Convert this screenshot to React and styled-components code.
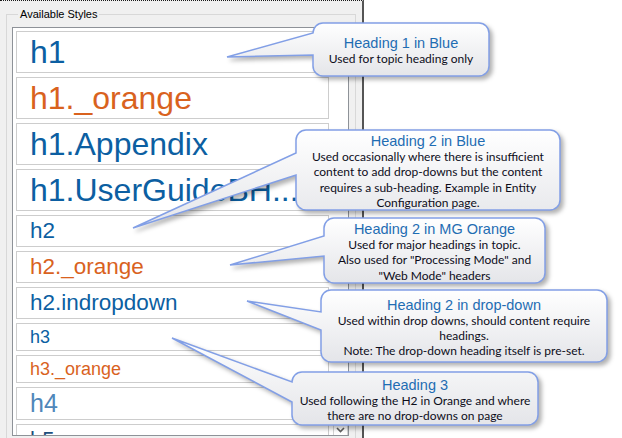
import React, { useId } from 'react';
import styled, { createGlobalStyle } from 'styled-components';

const GlobalStyle = createGlobalStyle`
  html, body {
    margin: 0;
    padding: 0;
    background: #fff;
  }
  body {
    overflow: hidden;
  }
`;

const BLUE = '#0c5fa2';
const ORANGE = '#d9621e';

// style list entries
const styleItems = [
  { name: 'h1', size: 32, lh: 40, color: BLUE },
  { name: 'h1._orange', size: 32, lh: 40, color: ORANGE },
  { name: 'h1.Appendix', size: 32, lh: 40, color: BLUE },
  { name: 'h1.UserGuideBH...', size: 32, lh: 40, color: BLUE },
  { name: 'h2', size: 22.5, lh: 30, color: BLUE },
  { name: 'h2._orange', size: 22.5, lh: 30, color: ORANGE },
  { name: 'h2.indropdown', size: 22.5, lh: 30, color: BLUE },
  { name: 'h3', size: 18, lh: 26, color: BLUE },
  { name: 'h3._orange', size: 18, lh: 26, color: ORANGE },
  { name: 'h4', size: 25, lh: 31, color: '#4f87ba' },
  { name: 'h5', size: 22, lh: 30, color: '#1d4f7c' },
];

// callouts: box in page coords, tip and tail base (page y) on the left edge
const callouts = [
  {
    title: 'Heading 1 in Blue',
    lines: ['Used for topic heading only'],
    left: 313, top: 23, width: 176, height: 53,
    tip: [227, 57], base: [33, 55],
  },
  {
    title: 'Heading 2 in Blue',
    lines: [
      'Used occasionally where there is insufficient',
      'content to add drop-downs but the content',
      'requires a sub-heading. Example in Entity',
      'Configuration page.',
    ],
    left: 296, top: 130, width: 264, height: 80,
    tip: [133, 228], base: [153, 175],
  },
  {
    title: 'Heading 2 in MG Orange',
    lines: [
      'Used for major headings in topic.',
      'Also used for "Processing Mode" and',
      '"Web Mode" headers',
    ],
    left: 324, top: 218, width: 221, height: 65,
    tip: [230, 265], base: [236, 256],
  },
  {
    title: 'Heading 2 in drop-down',
    lines: [
      'Used within drop downs, should content require',
      'headings.',
      'Note: The drop-down heading itself is pre-set.',
    ],
    left: 321, top: 290, width: 286, height: 72,
    tip: [247, 301], base: [312, 330],
  },
  {
    title: 'Heading 3',
    lines: [
      'Used following the H2 in Orange and where',
      'there are no drop-downs on page',
    ],
    left: 292, top: 372, width: 246, height: 53,
    tip: [172, 338], base: [382, 402],
  },
];

const bubblePath = (w, h, tx, ty, b1, b2, r = 10) =>
  `M${r},0 H${w - r} A${r},${r} 0 0 1 ${w},${r} V${h - r} ` +
  `A${r},${r} 0 0 1 ${w - r},${h} H${r} A${r},${r} 0 0 1 0,${h - r} ` +
  `V${b2} L${tx},${ty} L0,${b1} V${r} A${r},${r} 0 0 1 ${r},0 Z`;

const Callout = ({ c }) => {
  const id = useId().replace(/:/g, '');
  const tx = c.tip[0] - c.left;
  const ty = c.tip[1] - c.top;
  const b1 = Math.max(10, c.base[0] - c.top);
  const b2 = Math.min(c.height - 10, c.base[1] - c.top);
  return (
    <Bubble style={{ left: c.left, top: c.top, width: c.width, height: c.height }}>
      <BubbleShape width={c.width} height={c.height}>
        <defs>
          <linearGradient id={`g${id}`} x1="0" y1="0" x2="0" y2="1">
            <stop offset="0" stopColor="#ffffff" />
            <stop offset="1" stopColor="#e4e5e9" />
          </linearGradient>
        </defs>
        <path
          d={bubblePath(c.width, c.height, tx, ty, b1, b2)}
          fill={`url(#g${id})`}
          stroke="#829fe6"
          strokeWidth="1.5"
        />
      </BubbleShape>
      <BubbleText>
        <Title>{c.title}</Title>
        {c.lines.map((l, i) => (
          <Line key={i}>{l}</Line>
        ))}
      </BubbleText>
    </Bubble>
  );
};

const App = () => (
  <Page>
    <GlobalStyle />
    <Panel>
      <GroupBox>
        <Legend>Available Styles</Legend>
        <ListBox>
          <Items>
            {styleItems.map((s) => (
              <Item key={s.name} $size={s.size} $lh={s.lh} $color={s.color}>
                {s.name}
              </Item>
            ))}
          </Items>
          <Scrollbar>
            <ArrowButton>
              <svg width="9" height="6" viewBox="0 0 9 6">
                <polyline points="1,1 4.5,4.5 8,1" fill="none" stroke="#606060" strokeWidth="1.6" />
              </svg>
            </ArrowButton>
          </Scrollbar>
        </ListBox>
      </GroupBox>
    </Panel>
    {callouts.map((c) => (
      <Callout key={c.title} c={c} />
    ))}
  </Page>
);

// Styled components
const Page = styled.div`
  position: relative;
  display: flex;
  width: 622px;
  height: 438px;
  overflow: hidden;
  background: #fff;
`;

const Panel = styled.div`
  box-sizing: border-box;
  width: 364px;
  height: 438px;
  padding: 7px 6px 0 6px;
  background: #f0f0f0;
  border-top: 1px dotted #1a1a1a;
  border-right: 2px solid #555;
  display: flex;
  flex-direction: column;
  overflow: hidden;
`;

const GroupBox = styled.fieldset`
  margin: 0;
  padding: 6px 6px 0 5px;
  border: 1px solid #d8d8d8;
  border-bottom: none;
  flex: 1;
  min-width: 0;
`;

const Legend = styled.legend`
  margin-left: 6px;
  padding: 0 2px;
  font-family: 'Liberation Sans', Arial, sans-serif;
  font-size: 11px;
  line-height: 13px;
  color: #000;
`;

const ListBox = styled.div`
  box-sizing: border-box;
  height: 409px;
  display: flex;
  gap: 4px;
  padding: 3px 0 0 3px;
  background: #fff;
  border: 1px solid #8e9298;
`;

const Items = styled.div`
  flex: 1;
  min-width: 0;
  display: flex;
  flex-direction: column;
  gap: 4px;
  overflow: hidden;
`;

const Item = styled.div`
  flex-shrink: 0;
  padding-left: 13px;
  border: 1px solid #cdcdcd;
  background: #fff;
  font-family: 'Liberation Sans', Arial, sans-serif;
  font-size: ${(p) => p.$size}px;
  line-height: ${(p) => p.$lh}px;
  color: ${(p) => p.$color};
  white-space: nowrap;
  overflow: hidden;
  text-overflow: ellipsis;
`;

const Scrollbar = styled.div`
  width: 15px;
  display: flex;
  flex-direction: column;
  justify-content: flex-end;
`;

const ArrowButton = styled.div`
  box-sizing: border-box;
  height: 11px;
  display: flex;
  align-items: center;
  justify-content: center;
  border: 1px solid #d4d4d4;
  border-bottom: none;
  background: #fff;
`;

const Bubble = styled.div`
  position: absolute;
  z-index: 1;
  display: flex;
  align-items: center;
  justify-content: center;
`;

const BubbleShape = styled.svg`
  position: absolute;
  left: 0;
  top: 0;
  overflow: visible;
  filter: drop-shadow(3px 3px 2px rgba(0, 0, 0, 0.3));
`;

const BubbleText = styled.div`
  position: relative;
  padding-top: 3px;
  text-align: center;
  white-space: nowrap;
`;

const Title = styled.div`
  font-family: 'Liberation Sans', Arial, sans-serif;
  font-size: 14.5px;
  line-height: 16px;
  color: #1f6db3;
`;

const Line = styled.div`
  font-family: Lato, 'Liberation Sans', sans-serif;
  font-size: 12px;
  line-height: 15.3px;
  color: #0d0d1a;
`;

export default App;
